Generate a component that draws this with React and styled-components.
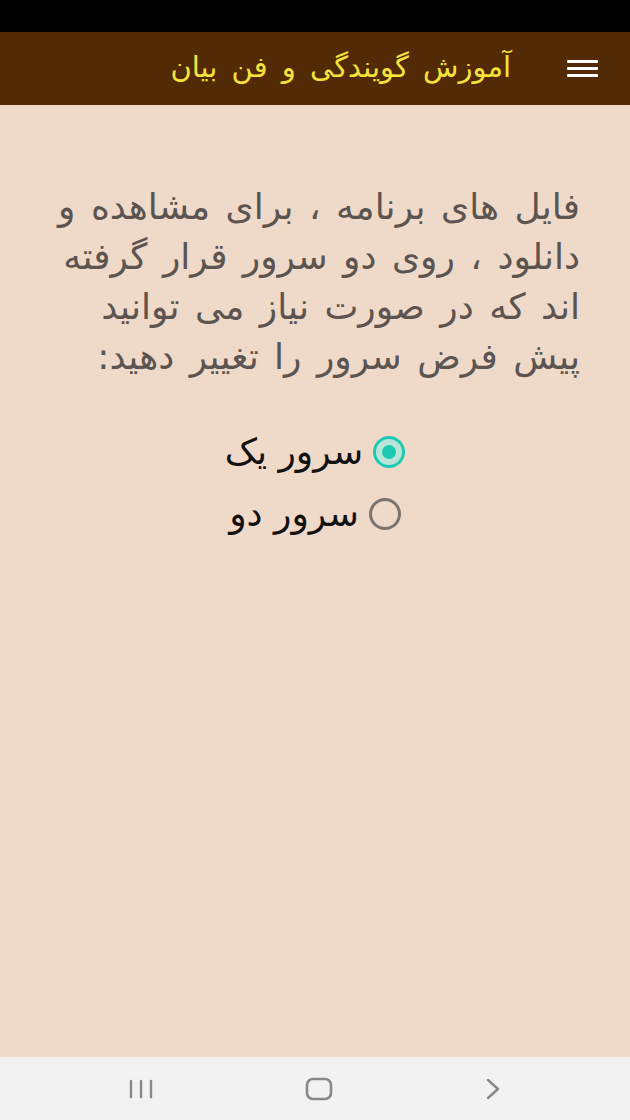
import React, { useState } from "react";
import styled, { createGlobalStyle } from "styled-components";

const GlobalStyle = createGlobalStyle`
  html, body {
    margin: 0;
    padding: 0;
  }
  body {
    font-family: "DejaVu Sans", "Noto Sans", sans-serif;
    background: #efd9c8;
  }
`;

const Screen = styled.div`
  width: 630px;
  height: 1120px;
  display: flex;
  flex-direction: column;
  background: #efd9c8;
  overflow: hidden;
`;

const StatusBar = styled.div`
  height: 32px;
  background: #000;
  flex: none;
`;

const AppBar = styled.header`
  height: 73px;
  flex: none;
  background: #522a05;
  display: flex;
  direction: rtl;
  align-items: center;
  padding-right: 32px;
  gap: 56px;
`;

const MenuButton = styled.div`
  width: 31px;
  display: flex;
  flex-direction: column;
  gap: 4px;
  span {
    display: block;
    height: 3px;
    background: #fff;
    border-radius: 1px;
  }
`;

const Title = styled.h1`
  margin: 0;
  font-size: 29px;
  font-weight: normal;
  color: #f6e23c;
  word-spacing: 5px;
  padding-bottom: 4px;
`;

const Content = styled.main`
  flex: 1;
  direction: rtl;
  padding: 77px 50px 0 40px;
`;

const Intro = styled.p`
  margin: 0;
  font-size: 36px;
  line-height: 50px;
  word-spacing: 4px;
  color: #5b5450;
  text-align: right;
  white-space: nowrap;
`;

const RadioGroup = styled.div`
  margin-top: 48px;
  display: flex;
  flex-direction: column;
  align-items: center;
  gap: 18px;
  padding-left: 10px;
`;

const Option = styled.label`
  display: flex;
  align-items: center;
  gap: 10px;
  font-size: 36px;
  line-height: 44px;
  color: #111;
  cursor: pointer;
`;

const Dot = styled.span`
  width: 32px;
  height: 32px;
  box-sizing: border-box;
  border-radius: 50%;
  display: flex;
  align-items: center;
  justify-content: center;
  border: 3px solid ${(p) => (p.$on ? "#1ec9b4" : "#7a7470")};
  background: ${(p) => (p.$on ? "#b8e6d8" : "transparent")};
  &::after {
    content: "";
    width: 14px;
    height: 14px;
    border-radius: 50%;
    background: #1ec9b4;
    display: ${(p) => (p.$on ? "block" : "none")};
  }
`;

const NavBar = styled.nav`
  height: 63px;
  flex: none;
  background: #f2f2f2;
  display: flex;
  align-items: center;
  justify-content: space-between;
  padding: 0 128px 0 128px;
`;

export default function App() {
  const [server, setServer] = useState(1);
  return (
    <Screen>
      <GlobalStyle />
      <StatusBar />
      <AppBar>
        <MenuButton>
          <span />
          <span />
          <span />
        </MenuButton>
        <Title>آموزش گویندگی و فن بیان</Title>
      </AppBar>
      <Content>
        <Intro>
          فایل های برنامه ، برای مشاهده و
          <br />
          دانلود ، روی دو سرور قرار گرفته
          <br />
          اند که در صورت نیاز می توانید
          <br />
          پیش فرض سرور را تغییر دهید:
        </Intro>
        <RadioGroup>
          <Option onClick={() => setServer(1)}>
            <Dot $on={server === 1} />
            سرور یک
          </Option>
          <Option onClick={() => setServer(2)}>
            <Dot $on={server === 2} />
            سرور دو
          </Option>
        </RadioGroup>
      </Content>
      <NavBar>
        <svg width="26" height="22" viewBox="0 0 26 22">
          <g stroke="#888" strokeWidth="2.4" strokeLinecap="round">
            <line x1="3" y1="3" x2="3" y2="19" />
            <line x1="13" y1="3" x2="13" y2="19" />
            <line x1="23" y1="3" x2="23" y2="19" />
          </g>
        </svg>
        <svg width="28" height="24" viewBox="0 0 28 24">
          <rect x="2" y="2" width="24" height="20" rx="6" fill="none" stroke="#888" strokeWidth="2.6" />
        </svg>
        <svg width="18" height="24" viewBox="0 0 18 24">
          <polyline points="4,3 14,12 4,21" fill="none" stroke="#888" strokeWidth="2.4" strokeLinecap="round" strokeLinejoin="round" />
        </svg>
      </NavBar>
    </Screen>
  );
}
